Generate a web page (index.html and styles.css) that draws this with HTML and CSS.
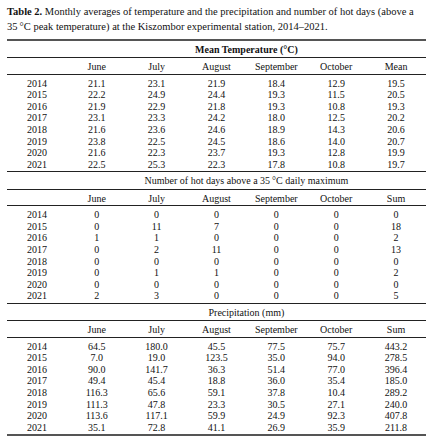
FILE: index.html
```html
<!DOCTYPE html>
<html>
<head>
<meta charset="utf-8">
<link rel="stylesheet" href="styles.css">
</head>
<body>
<div class="page">
<p class="caption"><b>Table 2.</b> Monthly averages of temperature and the precipitation and number of hot days (above a 35&#8201;°C peak temperature) at the Kiszombor experimental station, 2014–2021.</p>
<table class="data">
<colgroup><col><col><col><col><col><col><col></colgroup>
<tbody class="sec sec-first">
<tr class="title"><td></td><td colspan="6" class="t-mean"><b>Mean Temperature (°C)</b></td></tr>
<tr class="head"><td></td><td>June</td><td>July</td><td>August</td><td>September</td><td>October</td><td>Mean</td></tr>
<tr class="row first"><td>2014</td><td>21.1</td><td>23.1</td><td>21.9</td><td>18.4</td><td>12.9</td><td>19.5</td></tr>
<tr class="row"><td>2015</td><td>22.2</td><td>24.9</td><td>24.4</td><td>19.3</td><td>11.5</td><td>20.5</td></tr>
<tr class="row"><td>2016</td><td>21.9</td><td>22.9</td><td>21.8</td><td>19.3</td><td>10.8</td><td>19.3</td></tr>
<tr class="row"><td>2017</td><td>23.1</td><td>23.3</td><td>24.2</td><td>18.0</td><td>12.5</td><td>20.2</td></tr>
<tr class="row"><td>2018</td><td>21.6</td><td>23.6</td><td>24.6</td><td>18.9</td><td>14.3</td><td>20.6</td></tr>
<tr class="row"><td>2019</td><td>23.8</td><td>22.5</td><td>24.5</td><td>18.6</td><td>14.0</td><td>20.7</td></tr>
<tr class="row"><td>2020</td><td>21.6</td><td>22.3</td><td>23.7</td><td>19.3</td><td>12.8</td><td>19.9</td></tr>
<tr class="row last"><td>2021</td><td>22.5</td><td>25.3</td><td>22.3</td><td>17.8</td><td>10.8</td><td>19.7</td></tr>
</tbody>
<tbody class="sec">
<tr class="title"><td></td><td colspan="6" class="t-hot">Number of hot days above a 35&#8201;°C daily maximum</td></tr>
<tr class="head"><td></td><td>June</td><td>July</td><td>August</td><td>September</td><td>October</td><td>Sum</td></tr>
<tr class="row first"><td>2014</td><td>0</td><td>0</td><td>0</td><td>0</td><td>0</td><td>0</td></tr>
<tr class="row"><td>2015</td><td>0</td><td>11</td><td>7</td><td>0</td><td>0</td><td>18</td></tr>
<tr class="row"><td>2016</td><td>1</td><td>1</td><td>0</td><td>0</td><td>0</td><td>2</td></tr>
<tr class="row"><td>2017</td><td>0</td><td>2</td><td>11</td><td>0</td><td>0</td><td>13</td></tr>
<tr class="row"><td>2018</td><td>0</td><td>0</td><td>0</td><td>0</td><td>0</td><td>0</td></tr>
<tr class="row"><td>2019</td><td>0</td><td>1</td><td>1</td><td>0</td><td>0</td><td>2</td></tr>
<tr class="row"><td>2020</td><td>0</td><td>0</td><td>0</td><td>0</td><td>0</td><td>0</td></tr>
<tr class="row last"><td>2021</td><td>2</td><td>3</td><td>0</td><td>0</td><td>0</td><td>5</td></tr>
</tbody>
<tbody class="sec sec-last">
<tr class="title"><td></td><td colspan="6" class="t-prec">Precipitation (mm)</td></tr>
<tr class="head"><td></td><td>June</td><td>July</td><td>August</td><td>September</td><td>October</td><td>Sum</td></tr>
<tr class="row first"><td>2014</td><td>64.5</td><td>180.0</td><td>45.5</td><td>77.5</td><td>75.7</td><td>443.2</td></tr>
<tr class="row"><td>2015</td><td>7.0</td><td>19.0</td><td>123.5</td><td>35.0</td><td>94.0</td><td>278.5</td></tr>
<tr class="row"><td>2016</td><td>90.0</td><td>141.7</td><td>36.3</td><td>51.4</td><td>77.0</td><td>396.4</td></tr>
<tr class="row"><td>2017</td><td>49.4</td><td>45.4</td><td>18.8</td><td>36.0</td><td>35.4</td><td>185.0</td></tr>
<tr class="row"><td>2018</td><td>116.3</td><td>65.6</td><td>59.1</td><td>37.8</td><td>10.4</td><td>289.2</td></tr>
<tr class="row"><td>2019</td><td>111.3</td><td>47.8</td><td>23.3</td><td>30.5</td><td>27.1</td><td>240.0</td></tr>
<tr class="row"><td>2020</td><td>113.6</td><td>117.1</td><td>59.9</td><td>24.9</td><td>92.3</td><td>407.8</td></tr>
<tr class="row last"><td>2021</td><td>35.1</td><td>72.8</td><td>41.1</td><td>26.9</td><td>35.9</td><td>211.8</td></tr>
</tbody>
</table>
</div>
</body>
</html>
```

FILE: styles.css
```css
html, body {
  margin: 0;
  padding: 0;
  background: #fff;
}
body {
  font-family: "Liberation Serif", "DejaVu Serif", serif;
  color: #111;
}
.page {
  padding: 5px 5px 0 7px;
}
.caption {
  margin: 0 0 5px 0;
  font-size: 10.5px;
  line-height: 14.5px;
  width: 419px;
}
.data {
  width: 419px;
  border-collapse: collapse;
  table-layout: fixed;
  font-size: 10px;
  border-top: 2px solid #555;
  border-bottom: 2px solid #555;
}
.data td {
  padding: 0;
  line-height: 11.6px;
  text-align: center;
  white-space: nowrap;
}
.sec {
  border-top: 1px solid #222;
}
.sec-first {
  border-top: 2px solid #555;
}
.title td {
  padding-top: 3px;
  padding-bottom: 1.5px;
}
.title {
  border-bottom: 1px solid #222;
}
.head td {
  padding-top: 3px;
  padding-bottom: 1px;
}
.head {
  border-bottom: 1px solid #222;
}
.row.first td {
  padding-top: 3px;
}
.row.last td {
  padding-bottom: 1px;
}
.t-mean {
  padding-right: 16px;
}
.t-hot {
  padding-right: 41px;
}
.t-prec {
  padding-right: 5px;
}
```
